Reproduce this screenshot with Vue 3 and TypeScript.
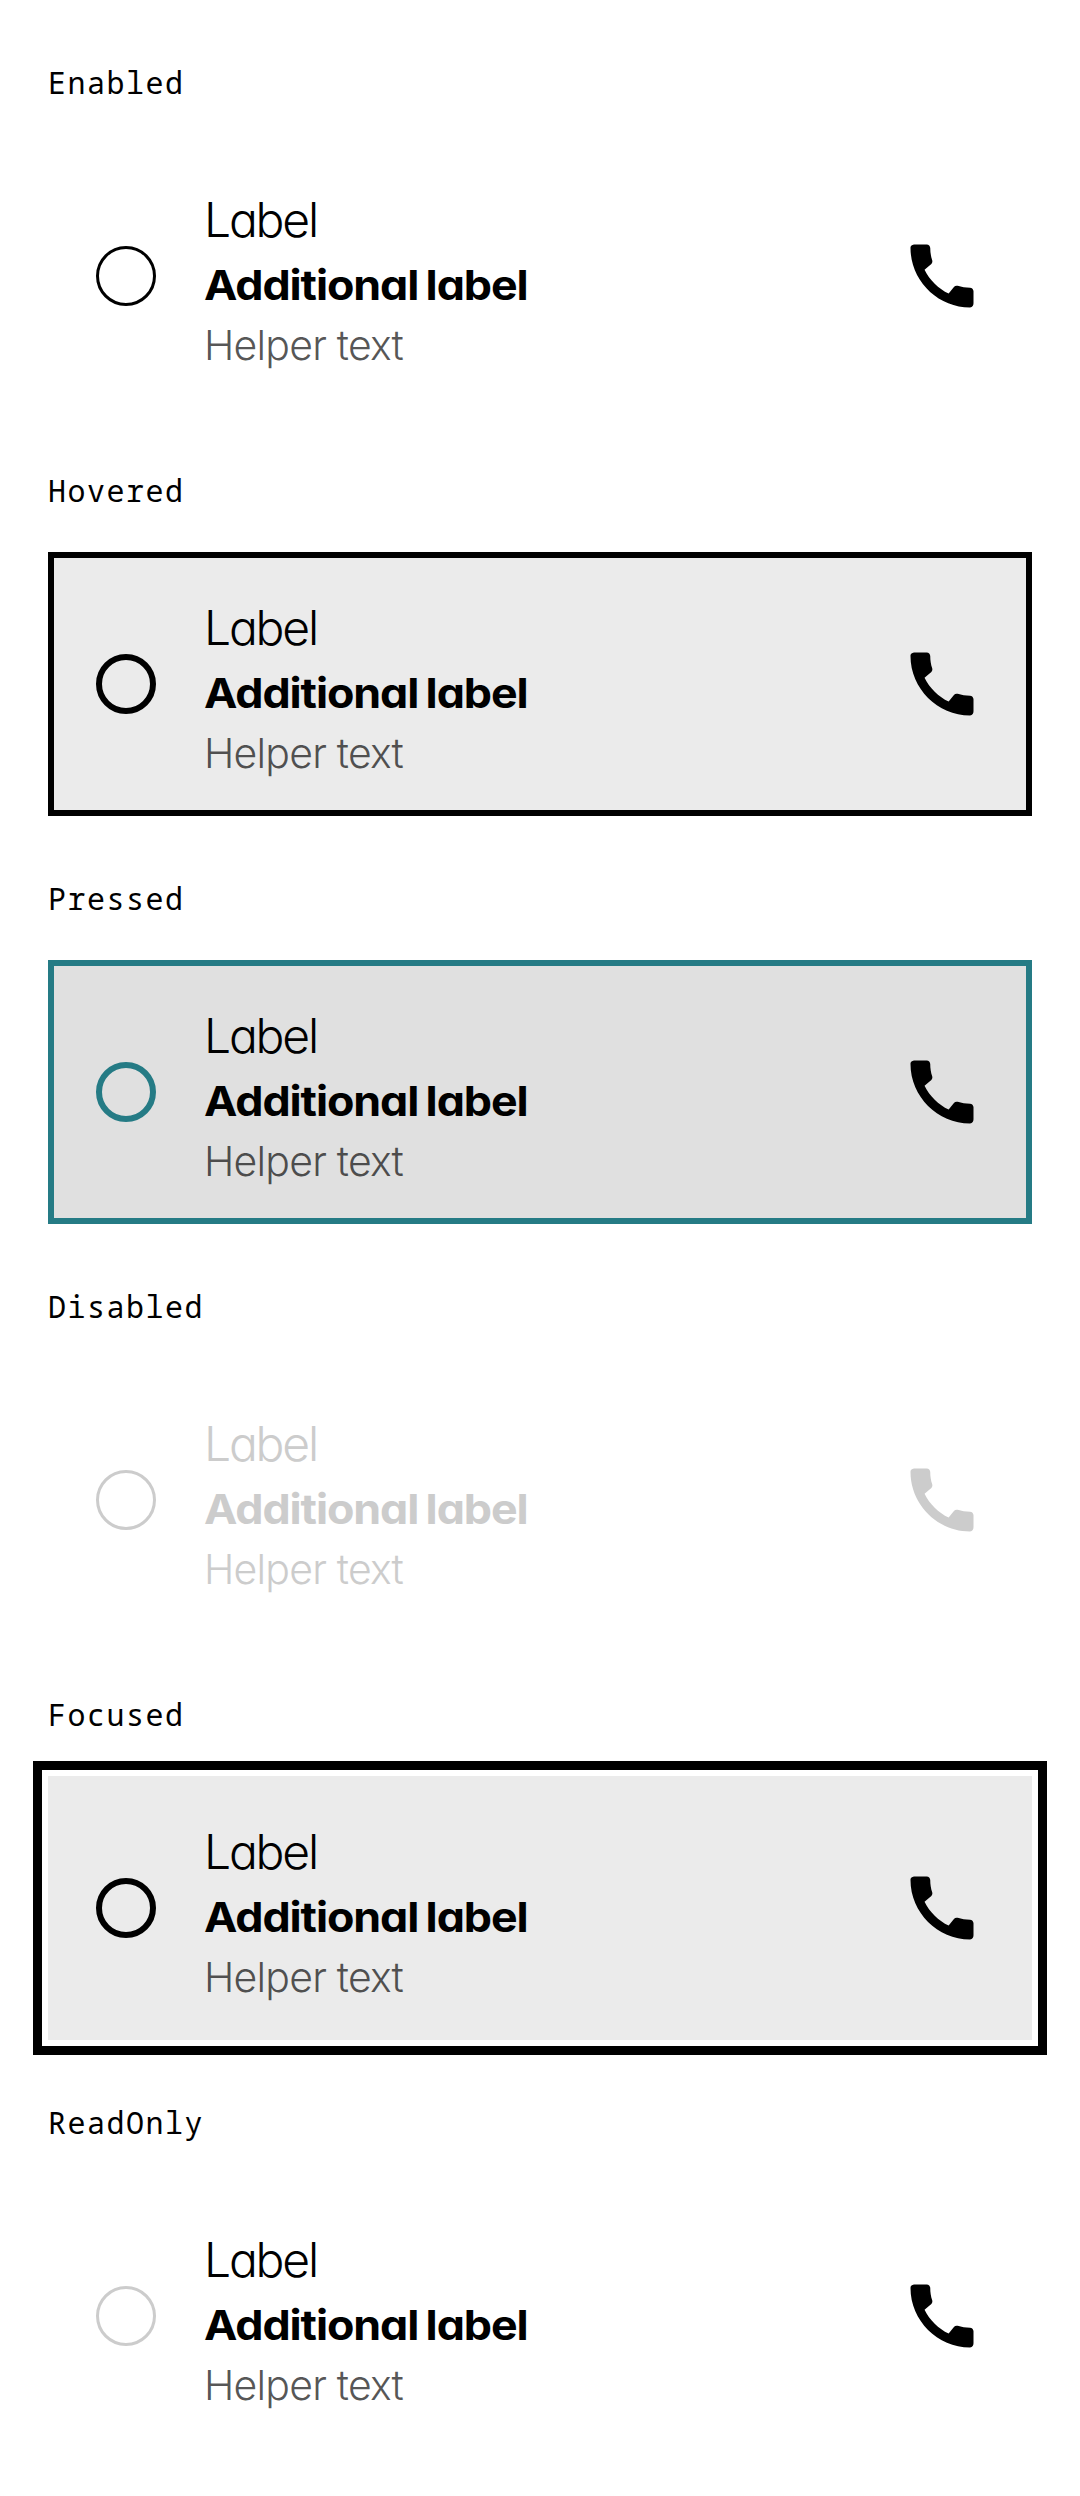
<script setup lang="ts">
interface RadioState {
  name: string
  variant: string
}

const states: RadioState[] = [
  { name: 'Enabled', variant: 'enabled' },
  { name: 'Hovered', variant: 'hovered' },
  { name: 'Pressed', variant: 'pressed' },
  { name: 'Disabled', variant: 'disabled' },
  { name: 'Focused', variant: 'focused' },
  { name: 'ReadOnly', variant: 'readonly' },
]
</script>

<template>
  <main class="page">
    <section v-for="state in states" :key="state.variant" class="state">
      <h2 class="heading">{{ state.name }}</h2>
      <div class="item" :class="state.variant">
        <span class="radio"></span>
        <div class="texts">
          <div class="label">Label</div>
          <div class="additional">Additional label</div>
          <div class="helper">Helper text</div>
        </div>
        <svg class="icon" viewBox="0 0 24 24" aria-hidden="true">
          <path
            fill="currentColor"
            d="M20.01 15.38c-1.23 0-2.42-.2-3.53-.56-.35-.12-.74-.03-1.01.24l-1.57 1.97c-2.83-1.35-5.48-3.9-6.89-6.83l1.95-1.66c.27-.28.35-.67.24-1.02-.37-1.11-.56-2.3-.56-3.53 0-.54-.45-.99-.99-.99H4.19C3.65 3 3 3.24 3 3.99 3 13.28 10.73 21 20.01 21c.71 0 .99-.63.99-1.18v-3.45c0-.54-.45-.99-.99-.99z"
          />
        </svg>
      </div>
    </section>
  </main>
</template>

<style>
body {
  background: #fff;
}
</style>

<style scoped>
.page {
  box-sizing: border-box;
  width: 1080px;
  height: 2496px;
  padding: 0 48px;
  overflow: hidden;
  background: #fff;
  color: #000;
}

.heading {
  box-sizing: border-box;
  height: 144px;
  margin: 0;
  padding-top: 59px;
  font: 400 30px/48px 'Droid Sans Mono', 'Noto Sans Mono', 'DejaVu Sans Mono', monospace;
  letter-spacing: 1.5px;
}

.item {
  box-sizing: border-box;
  display: flex;
  align-items: center;
  height: 264px;
  padding: 0 48px;
}

.radio {
  box-sizing: border-box;
  flex: none;
  width: 60px;
  height: 60px;
  border: 3px solid currentColor;
  border-radius: 50%;
}

.texts {
  flex: 1;
  align-self: flex-start;
  margin-left: 48px;
  padding-top: 43px;
  font-family: Inter, 'Open Sans', sans-serif;
  font-feature-settings: 'cv11' 1;
  white-space: nowrap;
}

.label {
  margin-bottom: -1px;
  font-size: 48px;
  font-weight: 300;
  line-height: 66px;
  letter-spacing: -2.2px;
}

.additional {
  width: max-content;
  font-size: 41px;
  font-weight: 700;
  line-height: 66px;
  letter-spacing: -1px;
  word-spacing: -2px;
  transform: scaleX(1.092);
  transform-origin: left;
}

.helper {
  font-size: 41px;
  font-weight: 300;
  line-height: 54px;
  letter-spacing: -0.8px;
  color: rgba(0, 0, 0, 0.68);
}

.icon {
  flex: none;
  width: 84px;
  height: 84px;
}

.hovered {
  background: #ebebeb;
  box-shadow: inset 0 0 0 6px #000;
}

.pressed {
  background: #e0e0e0;
  box-shadow: inset 0 0 0 6px #257b85;
}

.focused {
  background: #ebebeb;
  box-shadow: 0 0 0 6px #fff, 0 0 0 15px #000;
}

.hovered .radio,
.pressed .radio,
.focused .radio {
  border-width: 6px;
}

.pressed .radio {
  border-color: #257b85;
}

.readonly .radio {
  border-color: #ccc;
}

.disabled,
.disabled .helper {
  color: #ccc;
}
</style>
